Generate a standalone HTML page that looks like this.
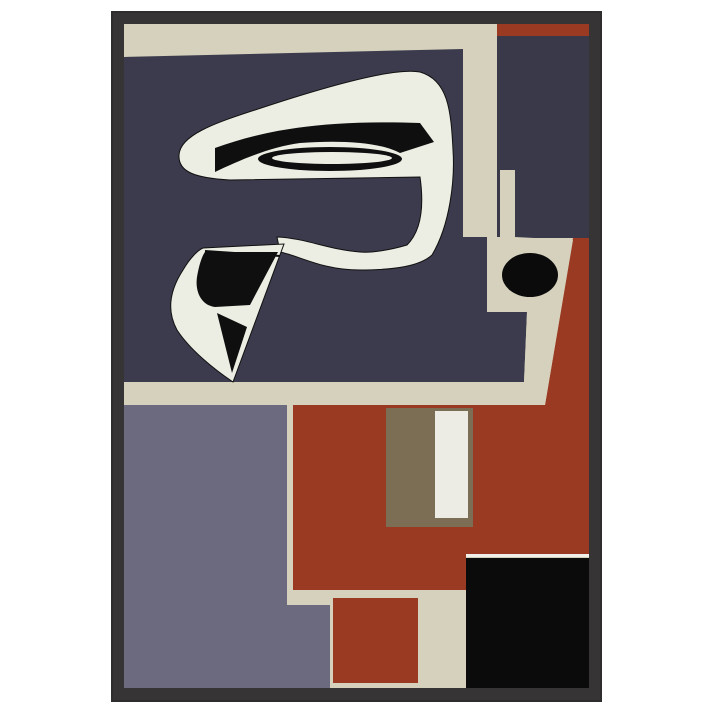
<!DOCTYPE html>
<html><head><meta charset="utf-8"><style>html,body{margin:0;padding:0;background:#fff;}svg{display:block}</style></head>
<body>
<svg width="713" height="713" viewBox="0 0 713 713" xmlns="http://www.w3.org/2000/svg">
<rect width="713" height="713" fill="#ffffff"/>
<rect x="111" y="11" width="491" height="691" fill="#2f2d2d"/>
<rect x="113" y="13" width="487" height="687" fill="#363434"/>
<rect x="124" y="24" width="465" height="664" fill="#d5d1bc"/>
<rect x="497" y="24" width="92" height="12" fill="#9a3a22"/>
<rect x="497" y="36" width="92" height="202" fill="#3a394a"/>
<polygon points="293,405 545,405 573,238 589,238 589,555 466,555 466,590 293,590" fill="#9a3a22"/>
<polygon points="124,57 463,49 463,237 487,237 487,312 527,312 524,382 124,382" fill="#3c3b4d"/>
<polygon points="500,170 515,170 515,237 573,240 545,405 124,405 124,382 524,382 527,312 487,312 487,237 500,237" fill="#d5d1bc"/>
<ellipse cx="530" cy="275" rx="28" ry="22" fill="#0b0b0c"/>
<polygon points="124,405 287,405 287,605 330,605 330,688 124,688" fill="#6c6a7f"/>
<rect x="333" y="598" width="85" height="85" fill="#9a3a22"/>
<rect x="466" y="554" width="123" height="3" fill="#f2f0ea"/>
<rect x="466" y="558" width="123" height="130" fill="#0c0b0b"/>
<rect x="386" y="408" width="87" height="119" fill="#7c6e55"/>
<rect x="435" y="411" width="33" height="107" fill="#ecece4"/>
<!-- white loop -->
<path d="M280,252 C300,256 322,270 360,270 C395,270 420,266 432,255 C450,225 455,180 453,150 C451,110 448,80 420,72 C390,66 300,95 255,110 C215,123 180,135 179,155 C178,172 195,178 230,180 L420,177 C424,205 422,230 407,245 C390,250 372,253 360,252 C330,250 305,238 277,237 Z" fill="#ecede3" stroke="#111" stroke-width="1"/>
<path d="M203,248 L284,244 L233,382 C215,370 190,350 177,330 C166,310 170,290 183,270 C190,258 198,250 203,248 Z" fill="#ecede3" stroke="#111" stroke-width="1"/>
<!-- black band -->
<path d="M215,148 C270,128 330,120 420,123 L434,142 L400,153 C380,142 340,140 300,143 C270,147 240,160 215,172 Z" fill="#0f0f10"/>
<ellipse cx="330" cy="159" rx="72" ry="12" fill="#0f0f10"/>
<ellipse cx="332" cy="158" rx="60" ry="6" fill="#ecede3"/>
<!-- wedge black -->
<path d="M205,252 L278,252 L250,305 L215,307 C200,305 195,290 197,277 C199,265 202,256 205,252 Z" fill="#0f0f10"/>
<path d="M217,313 L247,327 L232,373 Z" fill="#0f0f10"/>
<line x1="205" y1="251" x2="280" y2="256" stroke="#0f0f10" stroke-width="2"/>
</svg>
</body></html>
